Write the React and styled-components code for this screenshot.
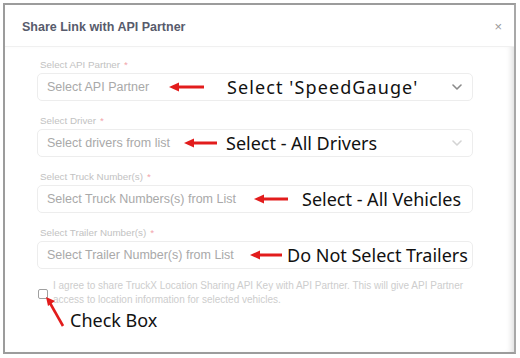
import React from "react";
import styled, { createGlobalStyle } from "styled-components";

const GlobalStyle = createGlobalStyle`
  html, body {
    margin: 0;
    padding: 0;
    background: #ffffff;
  }
  body {
    font-family: "Liberation Sans", Arial, sans-serif;
  }
`;

const Page = styled.div`
  width: 520px;
  height: 358px;
  padding: 3px 0 0 3px;
  box-sizing: border-box;
`;

const Frame = styled.div`
  width: 513px;
  height: 351px;
  box-sizing: border-box;
  border: 2px solid #9c9c9c;
  border-right-color: #a8a8a8;
  background: #ffffff;
  display: flex;
  flex-direction: column;
  overflow: hidden;
`;

const Header = styled.div`
  height: 42px;
  display: flex;
  align-items: center;
  justify-content: space-between;
  padding: 2px 12px 0 17px;
  box-sizing: border-box;
  border-bottom: 1px solid #f0f0f0;
`;

const Title = styled.h2`
  margin: 0;
  font-size: 12.5px;
  font-weight: 700;
  color: #575b6c;
`;

const Close = styled.span`
  font-size: 13px;
  color: #9a9a9a;
  line-height: 1;
`;

const Body = styled.div`
  flex: 1;
  padding: 12px 41px 0 32px;
  box-shadow: inset -6px 0 6px -4px rgba(0, 0, 0, 0.14);
`;

const Field = styled.div`
  margin-bottom: 14px;
`;

const Label = styled.div`
  height: 12px;
  line-height: 12px;
  padding-left: 3px;
  margin-bottom: 2px;
  font-size: 9.8px;
  color: #c2c2c2;
`;

const Req = styled.span`
  color: #f2a3ab;
  margin-left: 4px;
`;

const Box = styled.div`
  position: relative;
  height: 28px;
  box-sizing: border-box;
  border: 1px solid #ededed;
  border-radius: 5px;
  display: flex;
  align-items: center;
  justify-content: space-between;
  padding: 0 10px 0 9px;
`;

const Placeholder = styled.span`
  font-size: 12.5px;
  color: #a9a9a9;
`;

const Chevron = styled.svg`
  width: 10px;
  height: 6px;
  color: ${(p) => (p.$muted ? "#d4d4d4" : "#8a8a8a")};
`;

const Note = styled.div`
  position: absolute;
  top: 50%;
  left: ${(p) => p.$at}px;
  transform: translateY(-50%);
  display: flex;
  align-items: center;
  gap: ${(p) => p.$gap}px;
  pointer-events: none;
`;

const NoteText = styled.span`
  font-family: "Noto Sans", "DejaVu Sans", sans-serif;
  font-size: 18px;
  line-height: 24px;
  color: #111111;
  white-space: nowrap;
  letter-spacing: ${(p) => p.$spread || 0}px;
`;

const Agree = styled.div`
  position: relative;
  display: flex;
  align-items: flex-start;
  gap: 5px;
  margin-top: -4px;
  padding-left: 1px;
`;

const Check = styled.span`
  flex: none;
  width: 10px;
  height: 10px;
  margin-top: 10px;
  box-sizing: border-box;
  border: 1px solid #a0a0a0;
  border-radius: 2px;
`;

const AgreeText = styled.p`
  margin: 0;
  font-size: 10px;
  line-height: 14px;
  color: #cdcdcd;
  white-space: nowrap;
`;

const CheckNote = styled.div`
  position: absolute;
  left: 8px;
  top: 16px;
  display: flex;
  align-items: flex-end;
`;

const CheckLabel = styled(NoteText)`
  margin-left: 1px;
  margin-bottom: -3px;
`;

function Arrow({ len }) {
  return (
    <svg width={len} height="10" viewBox={`0 0 ${len} 10`}>
      <polygon points="0,5 10,0.5 10,9.5" fill="#e21c1c" />
      <line x1="8" y1="5" x2={len} y2="5" stroke="#e21c1c" strokeWidth="3" />
    </svg>
  );
}

function Down({ muted }) {
  return (
    <Chevron $muted={muted} viewBox="0 0 10 6">
      <path d="M1 1l4 4 4-4" fill="none" stroke="currentColor" strokeWidth="1.6" strokeLinecap="round" strokeLinejoin="round" />
    </Chevron>
  );
}

const fields = [
  {
    label: "Select API Partner",
    placeholder: "Select API Partner",
    chevron: "dark",
    note: { at: 131, len: 35, gap: 23, text: "Select 'SpeedGauge'", spread: 1.1 },
  },
  {
    label: "Select Driver",
    placeholder: "Select drivers from list",
    chevron: "muted",
    note: { at: 146, len: 33, gap: 9, text: "Select - All Drivers" },
  },
  {
    label: "Select Truck Number(s)",
    placeholder: "Select Truck Numbers(s) from List",
    note: { at: 216, len: 34, gap: 14, text: "Select - All Vehicles" },
  },
  {
    label: "Select Trailer Number(s)",
    placeholder: "Select Trailer Number(s) from List",
    note: { at: 212, len: 32, gap: 5, text: "Do Not Select Trailers" },
  },
];

export default function App() {
  return (
    <>
      <GlobalStyle />
      <Page>
        <Frame>
          <Header>
            <Title>Share Link with API Partner</Title>
            <Close>×</Close>
          </Header>
          <Body>
            {fields.map((f) => (
              <Field key={f.label}>
                <Label>
                  {f.label}
                  <Req>*</Req>
                </Label>
                <Box>
                  <Placeholder>{f.placeholder}</Placeholder>
                  {f.chevron && <Down muted={f.chevron === "muted"} />}
                  <Note $at={f.note.at} $gap={f.note.gap}>
                    <Arrow len={f.note.len} />
                    <NoteText $spread={f.note.spread}>{f.note.text}</NoteText>
                  </Note>
                </Box>
              </Field>
            ))}
            <Agree>
              <Check />
              <AgreeText>
                I agree to share TruckX Location Sharing API Key with API Partner. This will give API Partner
                <br />
                access to location information for selected vehicles.
              </AgreeText>
              <CheckNote>
                <svg width="24" height="34" viewBox="0 0 24 34">
                  <polygon points="1,2 10,6 3,11" fill="#e21c1c" />
                  <line x1="5" y1="8" x2="18" y2="31" stroke="#e21c1c" strokeWidth="2.6" />
                </svg>
                <CheckLabel>Check Box</CheckLabel>
              </CheckNote>
            </Agree>
          </Body>
        </Frame>
      </Page>
    </>
  );
}
